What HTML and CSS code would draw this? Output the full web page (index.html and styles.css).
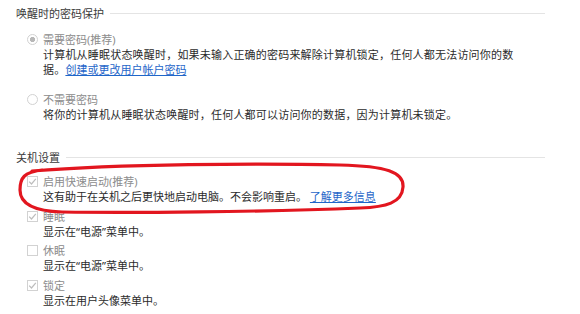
FILE: index.html
```html
<!DOCTYPE html>
<html lang="zh-CN">
<head>
<meta charset="utf-8">
<title>电源选项</title>
<link rel="stylesheet" href="styles.css">
</head>
<body>
<div class="page">
  <section class="group">
    <div class="head"><span class="head-text">唤醒时的密码保护</span><i class="rule"></i></div>
    <div class="opts opts-radio">
      <div class="opt">
        <span class="ctrl radio on"></span>
        <div class="body">
          <div class="label">需要密码(推荐)</div>
          <div class="desc">计算机从睡眠状态唤醒时，如果未输入正确的密码来解除计算机锁定，任何人都无法访问你的数<br>据。<a class="link" href="#">创建或更改用户帐户密码</a></div>
        </div>
      </div>
      <div class="opt">
        <span class="ctrl radio"></span>
        <div class="body">
          <div class="label">不需要密码</div>
          <div class="desc">将你的计算机从睡眠状态唤醒时，任何人都可以访问你的数据，因为计算机未锁定。</div>
        </div>
      </div>
    </div>
  </section>

  <section class="group group-2">
    <div class="head"><span class="head-text">关机设置</span><i class="rule"></i></div>
    <div class="opts opts-check">
      <div class="opt">
        <span class="ctrl check"><svg viewBox="0 0 11 11" width="11" height="11"><polyline points="2.2,5.6 4.5,8 8.8,2.8" /></svg></span>
        <div class="body">
          <div class="label">启用快速启动(推荐)</div>
          <div class="desc">这有助于在关机之后更快地启动电脑。不会影响重启。 <a class="link" href="#">了解更多信息</a></div>
        </div>
      </div>
      <div class="opt">
        <span class="ctrl check"><svg viewBox="0 0 11 11" width="11" height="11"><polyline points="2.2,5.6 4.5,8 8.8,2.8" /></svg></span>
        <div class="body">
          <div class="label">睡眠</div>
          <div class="desc">显示在“电源”菜单中。</div>
        </div>
      </div>
      <div class="opt">
        <span class="ctrl check off"></span>
        <div class="body">
          <div class="label">休眠</div>
          <div class="desc">显示在“电源”菜单中。</div>
        </div>
      </div>
      <div class="opt">
        <span class="ctrl check"><svg viewBox="0 0 11 11" width="11" height="11"><polyline points="2.2,5.6 4.5,8 8.8,2.8" /></svg></span>
        <div class="body">
          <div class="label">锁定</div>
          <div class="desc">显示在用户头像菜单中。</div>
        </div>
      </div>
    </div>
  </section>

  <svg class="mark" viewBox="0 0 580 314" width="580" height="314" aria-hidden="true">
    <path d="M 32 171 C 120 164, 260 163, 340 165 C 386 166, 404 172, 403 187 C 402 203, 386 207, 360 208 C 260 212, 130 213, 62 212 C 30 211, 20 202, 20 190 C 20 178, 24 172, 42 170" />
  </svg>
</div>
</body>
</html>
```

FILE: styles.css
```css
html, body {
  margin: 0;
  padding: 0;
  background: #ffffff;
}

body {
  font-family: "Noto Sans", "Noto Sans CJK SC", sans-serif;
  font-size: 11px;
  line-height: 15px;
  color: #2b2b2b;
  width: 580px;
  height: 314px;
  overflow: hidden;
}

.page {
  position: relative;
  width: 529px;
  height: 308px;
  padding: 6px 0 0 16px;
}

.head {
  display: flex;
  align-items: center;
  height: 15px;
}

.head-text {
  color: #3a3a3a;
  white-space: nowrap;
}

.rule {
  flex: 1;
  height: 1px;
  margin-left: 6px;
  background: #e4e4e4;
}

.group-2 {
  margin-top: 28px;
}

.opts {
  display: flex;
  flex-direction: column;
  padding-left: 11px;
}

.opts-radio {
  margin-top: 11px;
  gap: 15px;
}

.opts-radio .desc {
  letter-spacing: 0.2px;
  white-space: nowrap;
}

.opts-check {
  margin-top: 9px;
  gap: 4.5px;
}

.opt {
  display: flex;
  align-items: flex-start;
}

.ctrl {
  flex: none;
  box-sizing: border-box;
  width: 11px;
  height: 11px;
  margin: 2px 5px 0 0;
  border: 1px solid #d2d2d2;
  background: #ffffff;
}

.radio {
  border-radius: 50%;
}

.radio.on {
  background: radial-gradient(circle at center, #b8b8b8 0 2.4px, #ffffff 2.9px);
}

.check svg {
  display: block;
  margin: -1px;
}

.check polyline {
  fill: none;
  stroke: #bdbdbd;
  stroke-width: 1.2;
}

.label {
  color: #8c8c8c;
  white-space: nowrap;
}

.desc {
  color: #2b2b2b;
}

.link {
  color: #1f66c9;
  text-decoration: underline;
  letter-spacing: 0;
}

.mark {
  position: absolute;
  left: 0;
  top: 0;
  pointer-events: none;
}

.mark path {
  fill: none;
  stroke: #e2161f;
  stroke-width: 3.2;
  stroke-linecap: round;
}
```
